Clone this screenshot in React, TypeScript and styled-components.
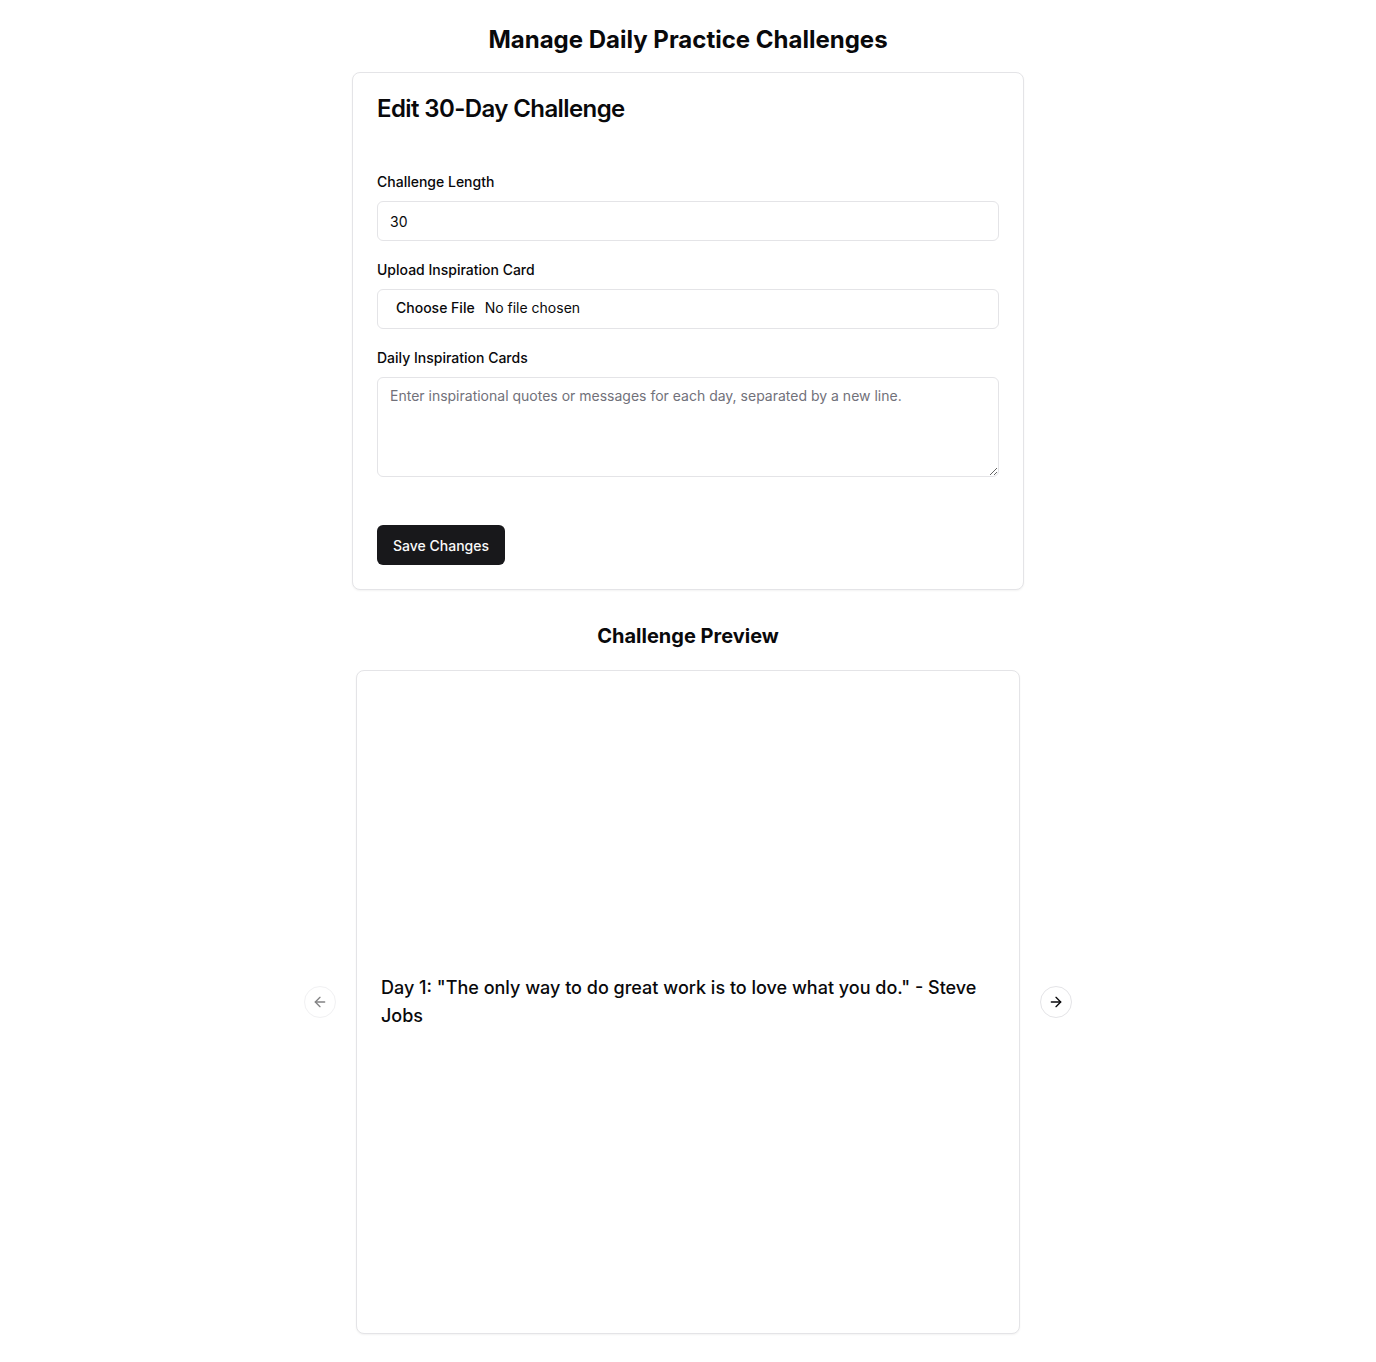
import React from "react";
import styled, { createGlobalStyle } from "styled-components";
import { ArrowLeft, ArrowRight } from "lucide-react";

const GlobalStyle = createGlobalStyle`
  * { box-sizing: border-box; }
  html, body { margin: 0; padding: 0; background: #ffffff; }
  body {
    font-family: Inter, "Noto Sans", "Liberation Sans", sans-serif;
    color: #09090b;
    -webkit-font-smoothing: antialiased;
  }
`;

const Page = styled.main`
  width: 672px;
  margin: 0 auto;
  padding: 24px 0 24px;
`;

const PageTitle = styled.h1`
  margin: 0 0 16px;
  font-size: 24px;
  line-height: 32px;
  font-weight: 700;
  text-align: center;
  color: #09090b;
`;

const Card = styled.section`
  border: 1px solid #e4e4e7;
  border-radius: 8px;
  background: #ffffff;
  box-shadow: 0 1px 2px 0 rgba(0, 0, 0, 0.05);
`;

const CardHeader = styled.div`
  padding: 24px;
`;

const CardTitle = styled.h2`
  margin: 0;
  font-size: 24px;
  line-height: 24px;
  font-weight: 600;
  letter-spacing: -0.025em;
`;

const Form = styled.form`
  display: flex;
  flex-direction: column;
  gap: 19px;
  padding: 27px 24px 24px;
`;

const Field = styled.div`
  display: flex;
  flex-direction: column;
`;

const Label = styled.label`
  display: block;
  font-size: 14px;
  line-height: 20px;
  font-weight: 500;
  margin-bottom: 9px;
  color: #09090b;
`;

const Input = styled.input`
  height: 40px;
  width: 100%;
  border: 1px solid #e4e4e7;
  border-radius: 6px;
  background: #ffffff;
  padding: 8px 12px;
  font-family: inherit;
  font-size: 14px;
  color: #09090b;
  outline: none;

  &::file-selector-button {
    border: 0;
    background: transparent;
    font-family: inherit;
    font-size: 14px;
    font-weight: 500;
    color: #09090b;
    padding: 1px 6px;
    margin-right: 4px;
  }
`;

const TextArea = styled.textarea`
  height: 100px;
  width: 100%;
  border: 1px solid #e4e4e7;
  border-radius: 6px;
  background: #ffffff;
  padding: 8px 12px;
  font-family: inherit;
  font-size: 14px;
  line-height: 20px;
  color: #09090b;
  outline: none;
  resize: vertical;
  display: block;

  &::placeholder {
    color: #71717a;
  }
`;

const SaveButton = styled.button`
  align-self: flex-start;
  margin-top: 29px;
  height: 40px;
  padding: 0 16px;
  border: 0;
  border-radius: 6px;
  background: #18181b;
  color: #fafafa;
  font-family: inherit;
  font-size: 14px;
  font-weight: 500;
  cursor: pointer;
`;

const SectionTitle = styled.h2`
  margin: 32px 0 16px;
  font-size: 20px;
  line-height: 28px;
  font-weight: 700;
  text-align: center;
  color: #09090b;
`;

const Carousel = styled.div`
  position: relative;
  width: 100%;
`;

const CarouselItem = styled.div`
  padding: 4px;
`;

const SlideCard = styled.div`
  aspect-ratio: 1 / 1;
  border: 1px solid #e4e4e7;
  border-radius: 8px;
  background: #ffffff;
  box-shadow: 0 1px 2px 0 rgba(0, 0, 0, 0.05);
  display: flex;
  align-items: center;
  justify-content: center;
  padding: 24px;
`;

const SlideText = styled.p`
  margin: 0;
  width: 100%;
  font-size: 18px;
  line-height: 28px;
  font-weight: 500;
  color: #09090b;
`;

const NavButton = styled.button<{ $side: "left" | "right"; $disabled?: boolean }>`
  position: absolute;
  top: 50%;
  transform: translateY(-50%);
  ${(p) => (p.$side === "left" ? "left: -48px;" : "right: -48px;")}
  width: 32px;
  height: 32px;
  border-radius: 9999px;
  border: 1px solid #e4e4e7;
  background: #ffffff;
  display: flex;
  align-items: center;
  justify-content: center;
  padding: 0;
  color: #09090b;
  opacity: ${(p) => (p.$disabled ? 0.5 : 1)};
  cursor: pointer;
`;

export default function App() {
  return (
    <>
      <GlobalStyle />
      <Page>
        <PageTitle>Manage Daily Practice Challenges</PageTitle>
        <Card>
          <CardHeader>
            <CardTitle>Edit 30-Day Challenge</CardTitle>
          </CardHeader>
          <Form onSubmit={(e) => e.preventDefault()}>
            <Field>
              <Label htmlFor="length">Challenge Length</Label>
              <Input id="length" type="number" defaultValue={30} />
            </Field>
            <Field>
              <Label htmlFor="card">Upload Inspiration Card</Label>
              <Input id="card" type="file" />
            </Field>
            <Field>
              <Label htmlFor="cards">Daily Inspiration Cards</Label>
              <TextArea
                id="cards"
                placeholder="Enter inspirational quotes or messages for each day, separated by a new line."
              />
            </Field>
            <SaveButton type="submit">Save Changes</SaveButton>
          </Form>
        </Card>

        <SectionTitle>Challenge Preview</SectionTitle>
        <Carousel>
          <CarouselItem>
            <SlideCard>
              <SlideText>
                Day 1: "The only way to do great work is to love what you do." - Steve Jobs
              </SlideText>
            </SlideCard>
          </CarouselItem>
          <NavButton $side="left" $disabled aria-label="Previous slide">
            <ArrowLeft size={16} strokeWidth={2} />
          </NavButton>
          <NavButton $side="right" aria-label="Next slide">
            <ArrowRight size={16} strokeWidth={2} />
          </NavButton>
        </Carousel>
      </Page>
    </>
  );
}
